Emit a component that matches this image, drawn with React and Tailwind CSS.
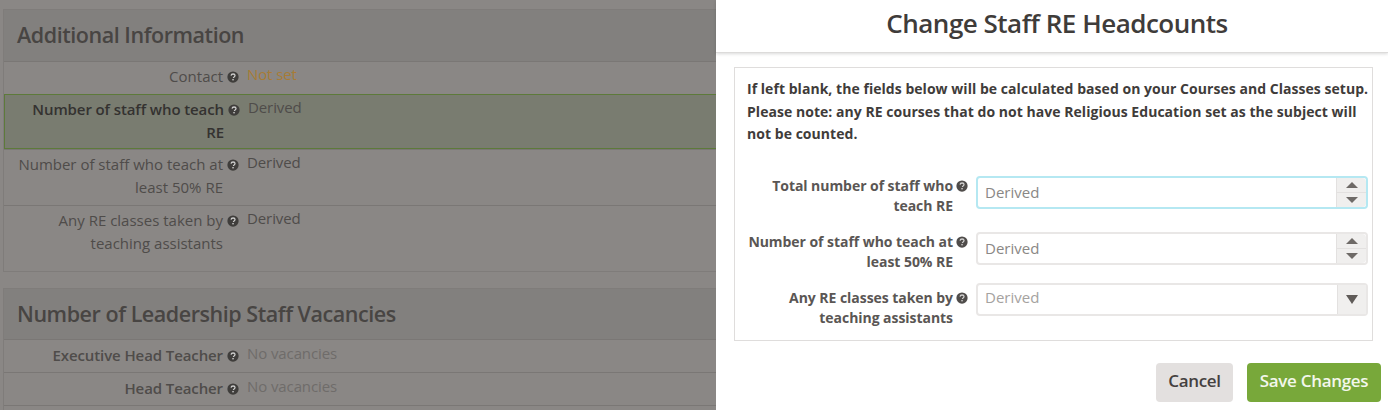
import React from "react";

const HelpDot = () => (
  <svg viewBox="0 0 16 16" className="w-3 h-3 block">
    <circle cx="8" cy="8" r="7.5" fill="currentColor" />
    <path d="M5.4 6.2c.2-1.5 1.3-2.2 2.7-2.2 1.5 0 2.6.9 2.6 2.1 0 1-.6 1.5-1.3 2-.6.4-.8.7-.8 1.3" fill="none" stroke="#fff" strokeOpacity="0.75" strokeWidth="1.7" />
    <rect x="7.1" y="10.6" width="1.9" height="1.9" fill="#fff" fillOpacity="0.75" />
  </svg>
);

const InfoRow = ({ label, value, bold, valueClass = "text-[#4f4c4a]", className = "", green }) => (
  <div className={`flex ${green ? "bg-[#797c70] border border-[#5d7a3a]" : "border-t border-[#7a7775]"} ${className}`}>
    <div className={`w-[236px] shrink-0 pr-[17px] text-right relative whitespace-nowrap text-[15px] leading-[23px] ${bold ? "font-semibold tracking-[-0.1px]" : ""} ${green ? "text-[#343230]" : "text-[#4f4c4a]"}`}>
      {label}
      <span className="absolute right-[1px] top-[6px] text-[#3f3d3b]"><HelpDot /></span>
    </div>
    <div className={`ml-[7px] -mt-[2px] text-[15px] leading-[23px] tracking-[-0.1px] ${valueClass}`}>{value}</div>
  </div>
);

const Section = ({ title, children, className = "", headerClass = "h-[51px]" }) => (
  <div className={`w-[720px] border border-[#7f7c7a] ${className}`}>
    <div className={`${headerClass} bg-[#82807e] flex items-center pl-[13px] text-[21.5px] font-semibold tracking-[-0.45px] text-[#484543]`}>
      {title}
    </div>
    {children}
  </div>
);

const Spin = () => (
  <div className="w-[30px] bg-[#f0efee] border-l border-[#e3e1e0] rounded-r flex flex-col">
    <div className="flex-1 flex items-center justify-center border-b border-[#e3e1e0]">
      <div className="w-0 h-0 border-x-[6px] border-x-transparent border-b-[6px] border-b-[#6e6a67]" />
    </div>
    <div className="flex-1 flex items-center justify-center">
      <div className="w-0 h-0 border-x-[6px] border-x-transparent border-t-[6px] border-t-[#6e6a67]" />
    </div>
  </div>
);

const Field = ({ label, children, className = "", labelClass = "" }) => (
  <div className={`flex ${className}`}>
    <div className={`w-[233px] shrink-0 ${labelClass}`}>
      <div className="relative pr-[15px] text-right whitespace-nowrap text-[14px] leading-[20px] font-bold text-[#5a5654] tracking-[-0.05px]">
        {label}
        <span className="absolute right-0 top-[4px] text-[#4f4c4a]"><HelpDot /></span>
      </div>
    </div>
    <div className="ml-[8px] flex-1">{children}</div>
  </div>
);

const NumberBox = ({ focused }) => (
  <div className={`h-[33px] flex rounded border-2 ${focused ? "border-[#b5e8f2]" : "border-[#e9e7e6]"}`}>
    <div className="flex-1 pl-[7px] text-[15px] leading-[29px] text-[#8a8785]">Derived</div>
    <Spin />
  </div>
);

export default function App() {
  return (
    <div className="w-[1388px] h-[410px] overflow-hidden flex font-['Open_Sans','Noto_Sans',sans-serif] bg-white">
      <div className="w-[716px] shrink-0 bg-[#8a8785] pt-[9px] pl-[3px] overflow-hidden">
        <Section title="Additional Information" className="h-[263px]">
          <InfoRow label="Contact" value="Not set" valueClass="text-[#a87c35]" className="h-[33px] pt-[3px]" />
          <InfoRow label={<>Number of staff who teach<br />RE</>} value="Derived" bold green className="h-[55px] pt-[3px]" />
          <InfoRow label={<>Number of staff who teach at<br />least 50% RE</>} value="Derived" className="h-[56px] pt-[3px]" />
          <InfoRow label={<>Any RE classes taken by<br />teaching assistants</>} value="Derived" className="h-[66px] pt-[3px]" />
        </Section>
        <Section title="Number of Leadership Staff Vacancies" headerClass="h-[50px]" className="mt-[16px]">
          <InfoRow label="Executive Head Teacher" value="No vacancies" bold valueClass="text-[#6f6c6a]" className="h-[33px] pt-[4px]" />
          <InfoRow label="Head Teacher" value="No vacancies" bold valueClass="text-[#6f6c6a]" className="h-[33px] pt-[4px]" />
          <div className="border-t border-[#7a7775] h-[20px]" />
        </Section>
      </div>

      <div className="flex-1 flex flex-col">
        <div className="h-[53px] shrink-0 flex items-center justify-center border-b border-[#dcdbda] shadow-[0_1px_3px_rgba(0,0,0,0.15)] text-[26px] font-semibold text-[#3f3c3a] tracking-[-0.5px] pb-[5px] pl-[10px]">
          Change Staff RE Headcounts
        </div>
        <div className="mt-[14px] ml-[18px] mr-[15px] h-[274px] border border-[#dfdddc]">
          <p className="pt-[10px] pl-[12px] whitespace-nowrap text-[14px] leading-[22.5px] font-bold text-[#3f3c3a] tracking-[0.04px]">
            If left blank, the fields below will be calculated based on your Courses and Classes setup.<br />
            Please note: any RE courses that do not have Religious Education set as the subject will<br />
            not be counted.
          </p>
          <div className="mt-[30px] mr-[4px]">
            <Field label={<>Total number of staff who<br />teach RE</>}>
              <NumberBox focused />
            </Field>
            <Field label={<>Number of staff who teach at<br />least 50% RE</>} className="mt-[16px]">
              <NumberBox />
            </Field>
            <Field label={<>Any RE classes taken by<br />teaching assistants</>} className="mt-[11px]" labelClass="pt-[5px]">
              <div className="h-[33px] flex rounded border-2 border-[#e9e7e6]">
                <div className="flex-1 pl-[7px] text-[15px] leading-[25px] text-[#a5a2a0]">Derived</div>
                <div className="w-[29px] bg-[#f0efee] border-l border-[#e3e1e0] flex items-center justify-center">
                  <div className="w-0 h-0 border-x-[6px] border-x-transparent border-t-[9px] border-t-[#5f5b58]" />
                </div>
              </div>
            </Field>
          </div>
        </div>
        <div className="flex justify-end gap-[14px] mt-[22px] mr-[7px]">
          <button className="h-[39px] w-[77px] pb-[3px] rounded bg-[#e3e0df] text-[#45413f] font-semibold text-[17px] tracking-[-0.3px]">Cancel</button>
          <button className="h-[39px] w-[134px] pb-[3px] rounded bg-[#78a83a] text-[#f3f7ec] font-semibold text-[17px] tracking-[-0.3px]">Save Changes</button>
        </div>
      </div>
    </div>
  );
}
